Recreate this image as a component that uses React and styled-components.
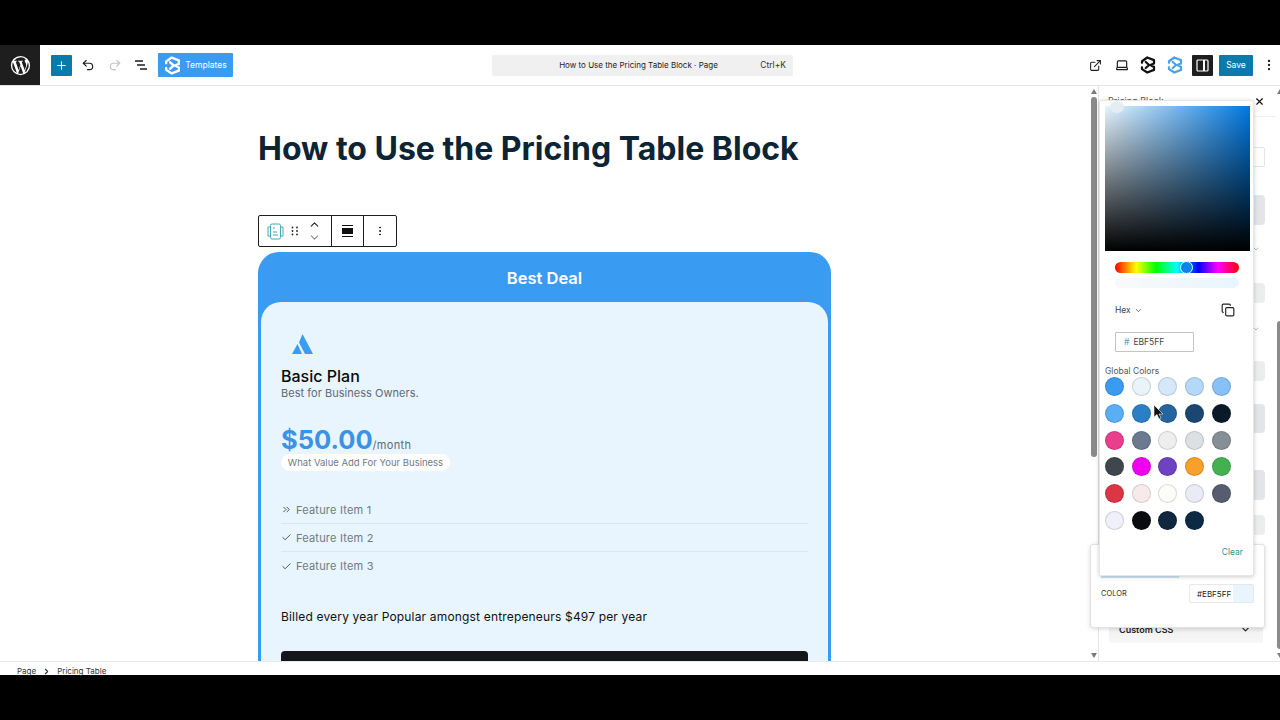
import React from 'react';
import styled, { createGlobalStyle } from 'styled-components';
import { Plus, Undo2, Redo2, ExternalLink, Laptop, MoreVertical, ChevronUp, ChevronDown, ChevronRight, ChevronsRight, Check, Copy, X } from 'lucide-react';

const GlobalStyle = createGlobalStyle`
  html, body { margin: 0; padding: 0; background: #000; }
  body { font-family: "Inter", "Liberation Sans", sans-serif; }
  * { box-sizing: border-box; }
`;

const Screen = styled.div`
  width: 1280px;
  height: 720px;
  padding: 45px 0;
  background: #000;
  overflow: hidden;
`;

const Editor = styled.div`
  position: relative;
  height: 630px;
  background: #fff;
  display: flex;
  flex-direction: column;
`;

const Header = styled.header`
  height: 41px;
  flex: none;
  display: flex;
  align-items: center;
  border-bottom: 1px solid #e4e4e4;
`;

const WpLogo = styled.div`
  width: 40px;
  height: 40px;
  background: #1e1e1e;
  display: flex;
  align-items: center;
  justify-content: center;
  color: #fff;
`;

const HeaderLeft = styled.div`
  width: 452px;
  display: flex;
  align-items: center;
  padding-left: 11px;
`;

const AddButton = styled.div`
  width: 21px;
  height: 21px;
  margin-right: 3px;
  background: #0a7aad;
  color: #fff;
  display: flex;
  align-items: center;
  justify-content: center;
  border-radius: 1px;
`;

const ToolIcon = styled.div`
  width: 26.5px;
  display: flex;
  justify-content: center;
  color: ${p => p.$muted ? '#c4c4c4' : '#1e1e1e'};
`;

const MenuIcon = styled(ToolIcon)`
  width: 22px;
  margin-left: 5px;
`;

const TemplatesButton = styled.div`
  height: 24px;
  width: 75px;
  margin-left: 3px;
  background: #3a9bf2;
  color: #fff;
  border-radius: 1px;
  display: flex;
  align-items: center;
  justify-content: center;
  gap: 3px;
  font-size: 8.5px;
`;

const CommandBar = styled.div`
  width: 301px;
  height: 21px;
  padding-right: 8px;
  background: #f0f0f0;
  border-radius: 2px;
  position: relative;
  display: flex;
  align-items: center;
  justify-content: center;
  font-size: 8px;
  color: #1e1e1e;
`;

const Shortcut = styled.span`
  position: absolute;
  right: 7px;
  font-size: 8.5px;
  color: #333;
`;

const HeaderRight = styled.div`
  flex: 1;
  display: flex;
  align-items: center;
  justify-content: flex-end;
`;

const SettingsToggle = styled.div`
  width: 21px;
  height: 21px;
  background: #1e1e1e;
  border-radius: 1px;
  color: #fff;
  display: flex;
  align-items: center;
  justify-content: center;
  margin: 0 6px 0 4px;
`;

const SaveButton = styled.div`
  width: 34px;
  height: 21px;
  background: #0a7aad;
  color: #fff;
  border-radius: 1px;
  font-size: 8.5px;
  display: flex;
  align-items: center;
  justify-content: center;
`;

const Body = styled.div`
  flex: 1;
  min-height: 0;
  display: flex;
`;

const Canvas = styled.main`
  width: 1090px;
  flex: none;
  overflow: hidden;
  padding: 44px 0 0 258px;
`;

const Title = styled.h1`
  margin: 0;
  font-family: "Inter", sans-serif;
  font-size: 32px;
  line-height: 38px;
  font-weight: 700;
  color: #0c2433;
`;

const BlockToolbar = styled.div`
  margin-top: 47px;
  width: 139px;
  height: 32px;
  border: 1px solid #1e1e1e;
  border-radius: 2px;
  display: flex;
  background: #fff;
`;

const ToolbarGroup = styled.div`
  width: ${p => p.$w}px;
  display: flex;
  align-items: center;
  justify-content: center;
  border-right: ${p => p.$last ? 'none' : '1px solid #1e1e1e'};
`;

const MoverGroup = styled(ToolbarGroup)`
  justify-content: flex-start;
  padding-left: 8px;
  gap: 7px;
`;

const Movers = styled.div`
  display: flex;
  flex-direction: column;
  align-items: center;
  margin-left: 2px;
`;

const PricingCard = styled.div`
  margin-top: 5px;
  width: 573px;
  height: 420px;
  background: #3a9bf2;
  border-radius: 21px 21px 0 0;
  padding: 0 3px;
  color: #0c0c0c;
`;

const CardBadge = styled.div`
  height: 50px;
  padding-top: 2px;
  display: flex;
  align-items: center;
  justify-content: center;
  color: #fff;
  font-weight: 600;
  font-size: 16.5px;
`;

const CardInner = styled.div`
  height: 370px;
  background: #e8f5fe;
  border-radius: 20px 20px 0 0;
  padding: 29px 20px 0;
`;

const PlanIcon = styled.div`
  height: 26px;
  padding-left: 11px;
  display: flex;
  align-items: center;
  color: #3a9bf2;
`;

const PlanName = styled.div`
  margin-top: 9px;
  font-size: 16px;
  line-height: 20px;
  font-weight: 500;
  color: #0a0a0a;
`;

const PlanSub = styled.div`
  font-size: 11px;
  line-height: 14px;
  color: #5e6b78;
  letter-spacing: 0.03px;
`;

const PriceRow = styled.div`
  margin-top: 28px;
  height: 24px;
  display: flex;
  align-items: baseline;
  line-height: 24px;
`;

const Price = styled.span`
  font-size: 25.5px;
  font-weight: 700;
  color: #3a93e6;
`;

const Period = styled.span`
  font-size: 11px;
  letter-spacing: 0.3px;
  color: #5e6b78;
`;

const ValuePill = styled.div`
  margin-top: 2px;
  width: 169px;
  height: 17px;
  background: #fff;
  border-radius: 9px;
  display: flex;
  align-items: center;
  justify-content: center;
  font-size: 9.5px;
  color: #6f7b86;
`;

const FeatureList = styled.ul`
  list-style: none;
  margin: 25px 0 0;
  padding: 0;
`;

const Feature = styled.li`
  height: 28px;
  display: flex;
  align-items: center;
  gap: 4px;
  font-size: 11px;
  letter-spacing: 0.2px;
  color: #6d7a85;
  border-bottom: ${p => p.$last ? 'none' : '1px solid #d8e8f2'};
  svg { color: #3b4a55; }
`;

const BilledText = styled.p`
  margin: 29px 0 0;
  font-size: 12px;
  line-height: 16px;
  letter-spacing: 0.17px;
  color: #111;
`;

const BuyButton = styled.div`
  margin-top: 26px;
  height: 40px;
  background: #13171c;
  border-radius: 4px 4px 0 0;
`;

const Scrollbar = styled.div`
  width: 8px;
  flex: none;
  position: relative;
  background: #fff;
  display: flex;
  flex-direction: column;
  align-items: center;
  padding-top: 3px;
`;

const ScrollThumb = styled.div`
  margin-top: ${p => p.$t}px;
  width: 6px;
  height: ${p => p.$h}px;
  background: #8a8a8a;
  border-radius: 3px;
`;

const Arrow = styled.div`
  width: 0;
  height: 0;
  border-left: 3px solid transparent;
  border-right: 3px solid transparent;
  ${p => p.$down ? 'border-top: 5px solid #7a7a7a;' : 'border-bottom: 5px solid #7a7a7a;'}
  ${p => p.$down ? 'margin-top: auto; margin-bottom: 3px;' : ''}
`;

const Sidebar = styled.aside`
  width: 182px;
  flex: none;
  display: flex;
  border-left: 1px solid #e4e4e4;
  overflow: hidden;
`;

const SidebarBody = styled.div`
  width: 177px;
  flex: none;
  padding: 9px 0 0 9px;
  display: flex;
  flex-direction: column;
  overflow: hidden;
`;

const SidebarTitle = styled.div`
  font-size: 9px;
  color: #555;
  height: 16px;
`;

const SidebarRule = styled.div`
  margin: 5px 0 0 -9px;
  height: 1px;
  background: #f0f0f0;
`;

const SidebarInput = styled.div`
  width: 157px;
  height: 20px;
  margin-top: 30px;
  border: 1px solid #e4e4e4;
  border-radius: 2px;
`;

const SidebarCell = styled.div`
  width: 157px;
  height: ${p => p.$h}px;
  margin-top: ${p => p.$t}px;
  background: ${p => p.$light ? '#eceeee' : '#e3e5e8'};
  border-radius: 4px;
`;

const SidebarChevron = styled.div`
  height: 8px;
  margin: ${p => p.$t}px 0 0 144px;
  display: flex;
  color: #7f9fb5;
`;

const CssRow = styled.div`
  width: 154px;
  height: 22px;
  position: absolute;
  left: 1109px;
  top: 576px;
  padding: 3px 12px 0 10px;
  display: flex;
  align-items: flex-start;
  justify-content: space-between;
  font-size: 9px;
  font-weight: 600;
  color: #222;
  background: linear-gradient(#ececec, #f8f8f8);
`;

const ColorField = styled.div`
  position: absolute;
  left: 1090px;
  top: 499px;
  width: 175px;
  height: 84px;
  background: #fff;
  border: 1px solid #e2e2e2;
  border-radius: 3px;
  box-shadow: 0 1px 4px rgba(0,0,0,.15);
  padding: 39px 10px 0;
  display: flex;
  align-items: flex-start;
  justify-content: space-between;
`;

const ColorSliderEdge = styled.div`
  position: absolute;
  left: 10px;
  top: 31px;
  width: 78px;
  height: 2px;
  background: #cfe6f5;
`;

const ColorLabel = styled.span`
  font-size: 7.5px;
  color: #333;
  margin-top: 5px;
`;

const ColorInput = styled.div`
  width: 65px;
  height: 19px;
  border: 1px solid #e8e8e8;
  border-radius: 2px;
  display: flex;
  align-items: center;
  justify-content: space-between;
  padding-left: 7px;
  font-size: 8px;
  color: #222;
`;

const ColorChip = styled.div`
  width: 20px;
  height: 17px;
  background: #e8f5fe;
`;

const Picker = styled.div`
  position: absolute;
  left: 1099px;
  top: 55px;
  width: 155px;
  height: 476px;
  background: #fff;
  border: 1px solid #e6e6e6;
  box-shadow: 0 1px 4px rgba(0,0,0,.2);
  border-radius: 2px;
  padding: 5px;
  color: #444;
`;

const SatPanel = styled.div`
  position: relative;
  width: 145px;
  height: 145px;
  background:
    linear-gradient(to bottom, transparent, #000),
    linear-gradient(to right, #e8f5fe, #0078e0);
`;

const SatThumb = styled.div`
  position: absolute;
  left: 5px;
  top: -5px;
  width: 14px;
  height: 12px;
  border-radius: 50%;
  background: #e4eef2;
`;

const HueBar = styled.div`
  position: relative;
  margin: 11px 0 0 10px;
  width: 124px;
  height: 11px;
  border-radius: 6px;
  background: linear-gradient(to right, #f00 0%, #ff0 17%, #0f0 33%, #0ff 50%, #00f 67%, #f0f 83%, #f00 100%);
`;

const HueThumb = styled.div`
  position: absolute;
  left: 65px;
  top: -1px;
  width: 13px;
  height: 13px;
  border-radius: 50%;
  border: 1px solid #dff;
  background: #0a84e8;
`;

const AlphaBar = styled.div`
  margin: 5px 0 0 10px;
  width: 124px;
  height: 10px;
  border-radius: 5px;
  background: linear-gradient(to right, #f9f9f9, #e8f5fe);
`;

const HexRow = styled.div`
  margin: 15px 0 0 10px;
  width: 120px;
  display: flex;
  align-items: center;
  justify-content: space-between;
  font-size: 8.5px;
  height: 14px;
`;

const HexLabel = styled.span`
  display: flex;
  align-items: center;
  gap: 3px;
`;

const HexInput = styled.div`
  margin: 15px 0 0 10px;
  width: 79px;
  height: 20px;
  border: 1px solid #c4c4c4;
  border-radius: 1px;
  display: flex;
  align-items: center;
  padding-left: 8px;
  gap: 4px;
  font-size: 8.5px;
  color: #444;
`;

const Hash = styled.span`
  color: #5a8fb5;
`;

const SwatchLabel = styled.div`
  margin-top: 13px;
  font-size: 8.5px;
  line-height: 12px;
  color: #555;
`;

const SwatchGrid = styled.div`
  display: grid;
  grid-template-columns: repeat(5, 19px);
  column-gap: 7.7px;
  row-gap: 7.8px;
`;

const Swatch = styled.div`
  width: 19px;
  height: 19px;
  border-radius: 50%;
  background: ${p => p.$c};
  border: 1px solid rgba(0,0,0,.14);
`;

const ClearLink = styled.div`
  margin: 17px 5px 0 0;
  text-align: right;
  font-size: 8.5px;
  color: #2f8f96;
`;

const CloseIcon = styled.div`
  position: absolute;
  left: 1254px;
  top: 51px;
  color: #111;
  display: flex;
`;

const Cursor = styled.svg`
  position: absolute;
  left: 1153px;
  top: 360px;
`;

const StatusBar = styled.footer`
  height: 14px;
  flex: none;
  border-top: 1px solid #e8e8e8;
  padding: 3px 0 0 17px;
  display: flex;
  gap: 6px;
  font-size: 8px;
  line-height: 12px;
  color: #333;
  align-items: flex-start;
  svg { margin-top: 2px; }
`;

const BrandMark = ({ size, color }) => (
  <svg width={size} height={size} viewBox="0 0 24 24" fill="none" stroke={color} strokeWidth="3" strokeLinejoin="round" strokeLinecap="round">
    <path d="M4 9V7l7-5 9 3.500v4.500l-5 2 5 2.500v4L11 22l-7-4.500V15" />
    <path d="M9 8l4.500 4L9 16" />
  </svg>
);

const swatches = [
  '#3a9bf2', '#e9f3f8', '#d4e8fa', '#b3d8f8', '#86c2f8',
  '#5aaef5', '#2c7fc6', '#24649f', '#1a4671', '#0a1a28',
  '#e83e8c', '#6c7a8f', '#eeeeee', '#dde0e2', '#868e96',
  '#3f474c', '#f000f0', '#6f42c1', '#f99f2c', '#44b150',
  '#dc3545', '#f8e9ea', '#fdfdf8', '#ebebf7', '#565d6f',
  '#f0f0fa', '#0a0c10', '#10273d', '#0c2a44',
];

const features = [
  { label: 'Feature Item 1', Icon: ChevronsRight },
  { label: 'Feature Item 2', Icon: Check },
  { label: 'Feature Item 3', Icon: Check },
];

export default function App() {
  return (
    <Screen>
      <GlobalStyle />
      <Editor>
        <Header>
          <WpLogo>
            <svg width="21" height="21" viewBox="0 0 24 24" fill="currentColor">
              <path d="M12 1a11 11 0 1 0 0 22 11 11 0 0 0 0-22zM2.6 12c0-1.4.3-2.7.8-3.8l4.5 12.3A9.4 9.4 0 0 1 2.600 12zm9.400 9.400c-.9 0-1.800-.1-2.700-.4l2.800-8.200 2.900 7.900c0 .1 0 .1.100.1-1 .4-2 .6-3.100.6zm1.300-13.800c.6 0 1.100-.1 1.100-.1.500-.1.500-.8 0-.8 0 0-1.500.1-2.500.1-.9 0-2.400-.1-2.400-.1-.5 0-.6.8 0 .8 0 0 .5.1 1 .1l1.400 3.900-2 6-3.400-9.900c.6 0 1.100-.1 1.100-.1.500-.1.500-.8 0-.8 0 0-1.500.1-2.500.1h-.6A9.400 9.400 0 0 1 18.400 5l-.1 0c-.9 0-1.600.8-1.600 1.700 0 .8.500 1.400 1 2.200.4.600.8 1.400.8 2.500 0 .8-.3 1.700-.7 3l-.9 3-3.600-9.800zm3.400 12.500 2.900-8.300c.5-1.300.7-2.400.7-3.300 0-.3 0-.6-.1-.9a9.400 9.400 0 0 1-3.500 12.500z" />
            </svg>
          </WpLogo>
          <HeaderLeft>
            <AddButton><Plus size={13} strokeWidth={2} /></AddButton>
            <ToolIcon><Undo2 size={14} /></ToolIcon>
            <ToolIcon $muted><Redo2 size={14} /></ToolIcon>
            <ToolIcon>
              <svg width="14" height="14" viewBox="0 0 14 14" stroke="currentColor" fill="none" strokeWidth="1.3">
                <path d="M1 3h8M3 7h8M6 11h7" />
              </svg>
            </ToolIcon>
            <TemplatesButton><BrandMark size={19} color="#fff" />Templates</TemplatesButton>
          </HeaderLeft>
          <CommandBar>
            How to Use the Pricing Table Block · Page
            <Shortcut>Ctrl+K</Shortcut>
          </CommandBar>
          <HeaderRight>
            <ToolIcon><ExternalLink size={13} /></ToolIcon>
            <ToolIcon><Laptop size={14} /></ToolIcon>
            <ToolIcon><BrandMark size={18} color="#111" /></ToolIcon>
            <ToolIcon><BrandMark size={18} color="#4aa3e8" /></ToolIcon>
            <SettingsToggle>
              <svg width="13" height="13" viewBox="0 0 13 13" fill="none" stroke="currentColor" strokeWidth="1.2">
                <rect x="1" y="1" width="11" height="11" rx="1" />
                <path d="M8 1v11" strokeWidth="2" />
              </svg>
            </SettingsToggle>
            <SaveButton>Save</SaveButton>
            <MenuIcon><MoreVertical size={14} /></MenuIcon>
          </HeaderRight>
        </Header>
        <Body>
          <Canvas>
            <Title>How to Use the Pricing Table Block</Title>
            <BlockToolbar>
              <MoverGroup $w={73}>
                <svg width="17" height="17" viewBox="0 0 17 17" fill="none" stroke="#4aa6b8" strokeWidth="1">
                  <rect x="3.500" y="1" width="10" height="15" rx="1.500" />
                  <path d="M3.500 4H1v9h2.500M13.500 4H16v9h-2.500M6 5h2M6 9h4M6 12h5" />
                </svg>
                <svg width="8" height="10" viewBox="0 0 8 10" fill="#222">
                  <circle cx="1.500" cy="1.500" r=".9" /><circle cx="6" cy="1.500" r=".9" />
                  <circle cx="1.500" cy="5" r=".9" /><circle cx="6" cy="5" r=".9" />
                  <circle cx="1.500" cy="8.500" r=".9" /><circle cx="6" cy="8.500" r=".9" />
                </svg>
                <Movers>
                  <ChevronUp size={13} color="#222" />
                  <ChevronDown size={13} color="#888" />
                </Movers>
              </MoverGroup>
              <ToolbarGroup $w={32}>
                <svg width="11" height="12" viewBox="0 0 11 12" fill="#111">
                  <rect y="0" width="11" height="1" /><rect y="3" width="11" height="6" /><rect y="11" width="11" height="1" />
                </svg>
              </ToolbarGroup>
              <ToolbarGroup $w={32} $last><MoreVertical size={12} color="#111" /></ToolbarGroup>
            </BlockToolbar>
            <PricingCard>
              <CardBadge>Best Deal</CardBadge>
              <CardInner>
                <PlanIcon>
                  <svg width="21" height="20" viewBox="0 0 21 20" fill="currentColor">
                    <path d="M10.500 0 21 20h-8L7 8.500zM5.500 10 10 20H0z" />
                  </svg>
                </PlanIcon>
                <PlanName>Basic Plan</PlanName>
                <PlanSub>Best for Business Owners.</PlanSub>
                <PriceRow><Price>$50.00</Price><Period>/month</Period></PriceRow>
                <ValuePill>What Value Add For Your Business</ValuePill>
                <FeatureList>
                  {features.map(({ label, Icon }, i) => (
                    <Feature key={label} $last={i === features.length - 1}>
                      <Icon size={11} />{label}
                    </Feature>
                  ))}
                </FeatureList>
                <BilledText>Billed every year Popular amongst entrepeneurs $497 per year</BilledText>
                <BuyButton />
              </CardInner>
            </PricingCard>
          </Canvas>
          <Scrollbar>
            <Arrow />
            <ScrollThumb $t={3} $h={360} />
            <Arrow $down />
          </Scrollbar>
          <Sidebar>
            <SidebarBody>
              <SidebarTitle>Pricing Block</SidebarTitle>
              <SidebarRule />
              <SidebarInput />
              <SidebarCell $h={30} $t={28} />
              <SidebarChevron $t={20}><ChevronDown size={8} /></SidebarChevron>
              <SidebarCell $h={20} $t={30} $light />
              <SidebarChevron $t={22}><ChevronDown size={8} /></SidebarChevron>
              <SidebarCell $h={20} $t={28} $light />
              <SidebarCell $h={29} $t={23} />
              <SidebarCell $h={30} $t={37} />
              <SidebarCell $h={20} $t={15} $light />
            </SidebarBody>
            <Scrollbar>
              <Arrow />
              <ScrollThumb $t={227} $h={328} />
              <Arrow $down />
            </Scrollbar>
          </Sidebar>
        </Body>
        <StatusBar>
          Page <ChevronRight size={9} strokeWidth={3} /> Pricing Table
        </StatusBar>
        <CssRow>Custom CSS <ChevronDown size={11} strokeWidth={2.5} /></CssRow>
        <ColorField>
          <ColorSliderEdge />
          <ColorLabel>COLOR</ColorLabel>
          <ColorInput>#EBF5FF<ColorChip /></ColorInput>
        </ColorField>
        <Picker>
          <SatPanel><SatThumb /></SatPanel>
          <HueBar><HueThumb /></HueBar>
          <AlphaBar />
          <HexRow>
            <HexLabel>Hex <ChevronDown size={9} /></HexLabel>
            <Copy size={14} color="#222" />
          </HexRow>
          <HexInput><Hash>#</Hash>EBF5FF</HexInput>
          <SwatchLabel>Global Colors</SwatchLabel>
          <SwatchGrid>
            {swatches.map((c, i) => <Swatch key={i} $c={c} />)}
          </SwatchGrid>
          <ClearLink>Clear</ClearLink>
        </Picker>
        <CloseIcon><X size={11} strokeWidth={2.5} /></CloseIcon>
        <Cursor width="10" height="15" viewBox="0 0 10 15">
          <path d="M1 0v12l3-2.500 2 4.500 2-1-2-4h4z" fill="#111" stroke="#fff" strokeWidth=".6" />
        </Cursor>
      </Editor>
    </Screen>
  );
}
